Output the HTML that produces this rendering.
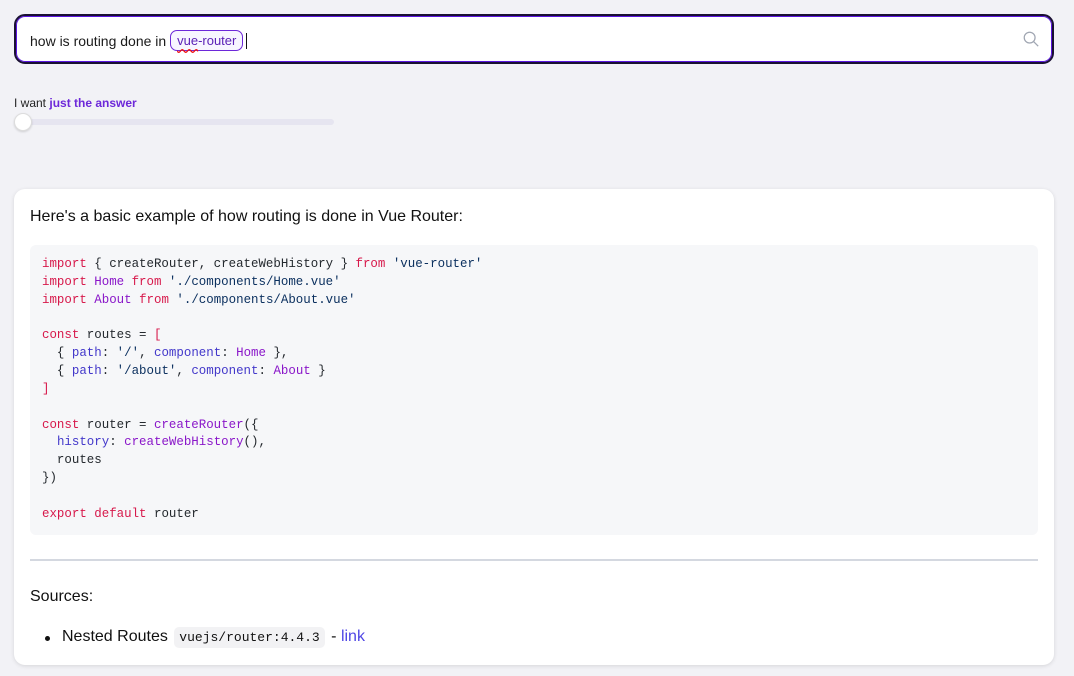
<!DOCTYPE html>
<html><head><meta charset="utf-8"><style>
*{box-sizing:border-box;margin:0;padding:0}
body{width:1074px;height:676px;background:#f2f2f6;font-family:"Liberation Sans",sans-serif;color:#111;position:relative;overflow:hidden}
.search{position:absolute;left:14px;top:14px;width:1040px;height:50px;background:#fff;border:2px solid #1a1033;border-radius:11px;box-shadow:inset 0 0 0 1px #5b16e0}
.q{position:absolute;left:14px;top:15px;font-size:14px;color:#1a1a1a;white-space:nowrap}
.chip{display:inline-block;border:1.5px solid #6d28d9;border-radius:7px;padding:2px 6px;color:#5b21b6;background:#f7f5ff;font-size:13px;position:relative;top:-1px;margin-left:0}
.chip u{text-decoration:underline wavy #e11;text-underline-offset:3px}
.caret{display:inline-block;width:1px;height:16px;background:#111;vertical-align:-3px;margin-left:3px}
.want{position:absolute;left:14px;top:96px;font-size:12px;color:#222}
.want b{color:#6d28d9}
.track{position:absolute;left:14px;top:119px;width:320px;height:6px;background:#e6e5f0;border-radius:3px}
.knob{position:absolute;left:14px;top:113px;width:18px;height:18px;border-radius:50%;background:#fff;border:1px solid #ddd;box-shadow:0 1px 2px rgba(0,0,0,.15)}
.card{position:absolute;left:14px;top:189px;width:1040px;height:476px;background:#fff;border-radius:11px;box-shadow:0 1px 4px rgba(0,0,0,.12)}
.intro{position:absolute;left:16px;top:19px;font-size:16px}
pre{position:absolute;left:16px;top:56px;width:1008px;height:290px;background:#f6f7f9;border-radius:6px;padding:11px 12px;font-family:"Liberation Mono",monospace;font-size:12.45px;line-height:17.85px;color:#24292e}
.k{color:#d7194b}.p{color:#8a17c9}.b{color:#4338ca}.s{color:#0a2f5e}
hr{position:absolute;left:16px;top:370px;width:1008px;border:0;border-top:2px solid #d4d8e0}
.src{position:absolute;left:16px;top:399px;font-size:16px}
.li{position:absolute;left:48px;top:439px;font-size:16px;white-space:nowrap}
.li:before{content:"";position:absolute;left:-17px;top:8px;width:5px;height:5px;border-radius:50%;background:#111}
.li code{font-family:"Liberation Mono",monospace;font-size:13px;background:#f2f2f4;border-radius:5px;padding:3px 5px;margin:0 2px}
.li a{color:#4f46e5;text-decoration:none}
</style></head><body>
<div class="search">
<div class="q">how is routing done in <span class="chip"><u>vue</u>-router</span><span class="caret"></span></div>
<svg style="position:absolute;right:12px;top:14px" width="18" height="18" viewBox="0 0 20 20" fill="none" stroke="#a0a6b2" stroke-width="1.4"><circle cx="8.5" cy="8.5" r="6"/><path d="M13 13l5 5"/></svg>
</div>
<div class="want">I want <b>just the answer</b></div>
<div class="track"></div><div class="knob"></div>
<div class="card">
<div class="intro">Here's a basic example of how routing is done in Vue Router:</div>
<pre><span class="k">import</span> { createRouter, createWebHistory } <span class="k">from</span> <span class="s">'vue-router'</span>
<span class="k">import</span> <span class="p">Home</span> <span class="k">from</span> <span class="s">'./components/Home.vue'</span>
<span class="k">import</span> <span class="p">About</span> <span class="k">from</span> <span class="s">'./components/About.vue'</span>

<span class="k">const</span> routes = <span class="k">[</span>
  { <span class="b">path</span>: <span class="s">'/'</span>, <span class="b">component</span>: <span class="p">Home</span> },
  { <span class="b">path</span>: <span class="s">'/about'</span>, <span class="b">component</span>: <span class="p">About</span> }
<span class="k">]</span>

<span class="k">const</span> router = <span class="p">createRouter</span>({
  <span class="b">history</span>: <span class="p">createWebHistory</span>(),
  routes
})

<span class="k">export</span> <span class="k">default</span> router</pre>
<hr>
<div class="src">Sources:</div>
<div class="li">Nested Routes <code>vuejs/router:4.4.3</code> - <a>link</a></div>
</div>
</body></html>
